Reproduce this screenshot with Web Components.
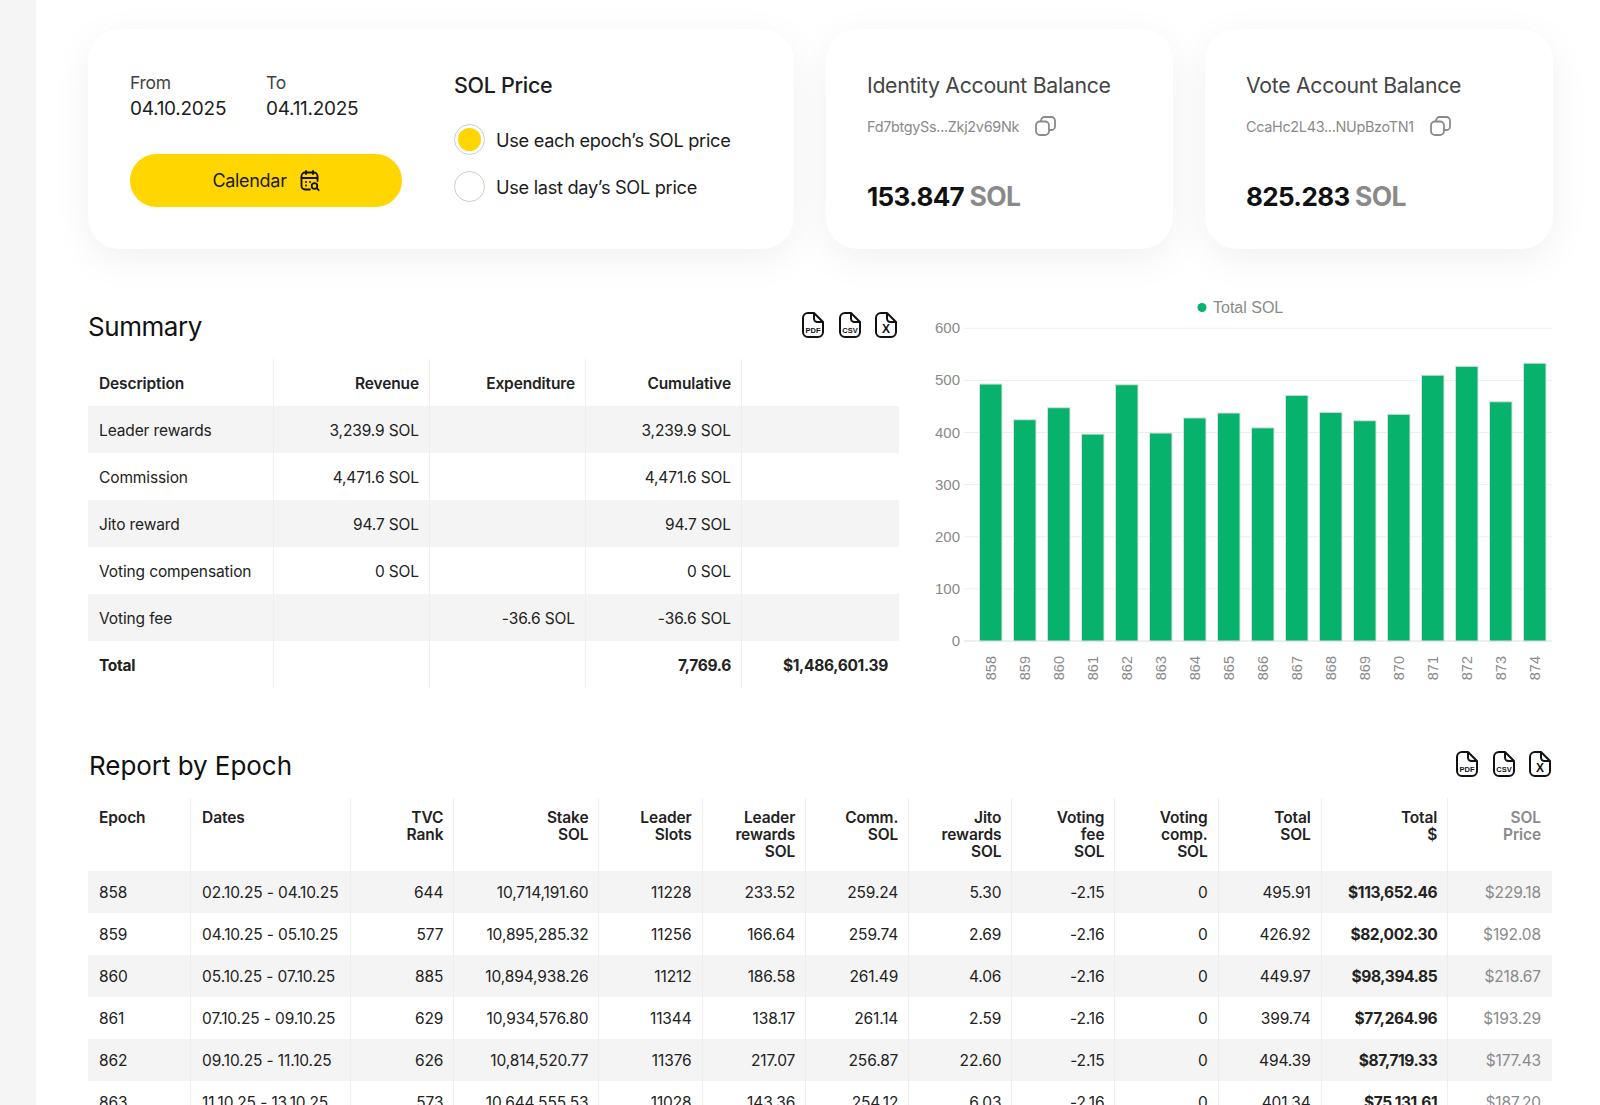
<!DOCTYPE html>
<html lang="en">
<head>
<meta charset="utf-8">
<title>Report</title>
<style>
html,body{margin:0;padding:0;height:1105px;overflow:hidden;background:#fff}
body{font-family:Inter,"Noto Sans",sans-serif;color:#1c1c1c;letter-spacing:-.3px}
</style>
</head>
<body>
<app-shell>
  <div style="display:grid;grid-template-columns:706px 347px 348px;gap:32px">
    <ui-card>
      <range-card></range-card>
    </ui-card>
    <ui-card><balance-card title-text="Identity Account Balance" addr="Fd7btgySs...Zkj2v69Nk" amount="153.847"></balance-card></ui-card>
    <ui-card><balance-card title-text="Vote Account Balance" addr="CcaHc2L43...NUpBzoTN1" amount="825.283"></balance-card></ui-card>
  </div>
  <div style="display:grid;grid-template-columns:811px 621px;gap:33px;margin-top:46px">
    <div>
      <section-head h="64" style="letter-spacing:-.45px">Summary</section-head>
      <summary-table></summary-table>
    </div>
    <sol-chart></sol-chart>
  </div>
  <div style="margin-top:58px">
    <section-head h="40" style="margin-bottom:12px;letter-spacing:-.05px;padding-left:1px">Report by Epoch</section-head>
    <epoch-table></epoch-table>
  </div>
</app-shell>
<script>
const def=(name,html)=>customElements.define(name,class extends HTMLElement{
  connectedCallback(){
    if(this.shadowRoot)return;
    const r=this.attachShadow({mode:'open'});
    r.innerHTML=typeof html==='function'?html(this):html;
  }
});

def('app-shell',`<style>
:host{display:flex;width:1600px;height:1105px;overflow:hidden;background:#fff}
aside{width:36px;flex:none;background:#f5f5f5}
main{flex:1;padding:29px 47px 0 52px;min-width:0}
</style><aside></aside><main><slot></slot></main>`);

def('ui-card',`<style>
:host{display:block;height:220px;box-sizing:border-box;background:#fff;border-radius:32px;box-shadow:0 10px 40px rgba(0,0,0,.06)}
</style><slot></slot>`);

const calIcon=`<svg width="20" height="22" viewBox="0 0 20 22" fill="none" stroke="#111" stroke-width="1.8" stroke-linecap="round" stroke-linejoin="round"><path d="M10 19.5H5a3.5 3.5 0 0 1-3.5-3.5V6A3.5 3.5 0 0 1 5 2.5h9A3.5 3.5 0 0 1 17.5 6v5"/><path d="M1.5 8h16M6 1v3M13 1v3"/><path d="M6 12h.01M10 12h.01M6 15.5h.01" stroke-width="2"/><circle cx="14.5" cy="16" r="2.8"/><path d="M16.7 18.2L18.7 20.2"/></svg>`;

def('range-card',`<style>
:host{display:flex;box-sizing:border-box;height:100%;padding:0 42px}
.l{width:272px;flex:none;margin-right:52px}
.dates{display:flex;gap:0;padding-top:43px}
.dates>div{width:136.5px}
.k{font-size:17.5px;line-height:22px;color:#444}
.v{font-size:19px;line-height:24px;margin-top:3px;color:#1c1c1c;letter-spacing:-.27px}
button{all:unset;box-sizing:border-box;display:flex;align-items:center;justify-content:center;gap:13px;width:272px;height:53px;margin-top:33px;border-radius:27px;background:#ffd600;font-size:18px;color:#1c1c1c}
.r{padding-top:42px}
h3{margin:0;font-size:21.5px;line-height:28px;font-weight:500;color:#1c1c1c}
.opt{display:flex;align-items:center;gap:11px;height:31px;margin-bottom:16px;font-size:18.2px}
.opts{margin-top:25px}
i{display:block;box-sizing:border-box;width:31px;height:31px;border-radius:50%;border:1.5px solid #ccc;background:#fff;position:relative}
i.on::after{content:"";position:absolute;inset:3px;border-radius:50%;background:#ffd600}
</style>
<div class="l"><div class="dates"><div><div class="k">From</div><div class="v">04.10.2025</div></div><div><div class="k">To</div><div class="v">04.11.2025</div></div></div>
<button><span>Calendar</span>${calIcon}</button></div>
<div class="r"><h3>SOL Price</h3><div class="opts">
<div class="opt"><i class="on"></i><span>Use each epoch’s SOL price</span></div>
<div class="opt"><i></i><span>Use last day’s SOL price</span></div></div></div>`);

const copyIcon=`<svg width="21" height="20" viewBox="0 0 21 20" fill="none" stroke="#8a8a8a" stroke-width="1.8" stroke-linejoin="round"><rect x="1" y="5.5" width="13" height="13.5" rx="4"/><path d="M6 5.5V4.5A3.5 3.5 0 0 1 9.5 1H16.5A3.5 3.5 0 0 1 20 4.5V10.5A3.5 3.5 0 0 1 16.5 14H14"/></svg>`;

def('balance-card',el=>`<style>
:host{display:block;padding:42px 0 0 41px}
h3{margin:0;font-size:21.25px;line-height:28px;font-weight:400;color:#444}
.a{display:flex;align-items:center;gap:16px;height:24px;margin-top:15px;font-size:14.4px;color:#8a8a8a}
.b{margin-top:40px;font-size:26px;line-height:36px;font-weight:700;color:#111;letter-spacing:-.65px}
.b span{color:#8a8a8a;font-weight:700;font-size:26.5px}
</style><h3>${el.getAttribute('title-text')}</h3><div class="a"><span>${el.getAttribute('addr')}</span>${copyIcon}</div>
<div class="b">${el.getAttribute('amount')} <span>SOL</span></div>`);

const fileIcon=t=>`<svg width="22" height="26" viewBox="0 0 22 26" fill="none" stroke="#111" stroke-width="2" stroke-linejoin="round"><path d="M6 1H12L21 10V20A5 5 0 0 1 16 25H6A5 5 0 0 1 1 20V6A5 5 0 0 1 6 1Z"/><path d="M12 1V6.5A3.5 3.5 0 0 0 15.5 10H21"/><text x="11" y="${t==='X'?21:20.5}" text-anchor="middle" fill="#111" stroke="none" font-family="Liberation Sans,sans-serif" font-weight="700" font-size="${t==='X'?12:7.5}" letter-spacing="0">${t}</text></svg>`;

def('section-head',el=>`<style>
:host{display:flex;align-items:center;justify-content:space-between;height:${el.getAttribute('h')}px}
h2{margin:0;font-size:26px;line-height:32px;font-weight:400;color:#111}
div{display:flex;gap:14.5px;margin:-4px 2px 0 0}
</style><h2><slot></slot></h2><div>${fileIcon('PDF')}${fileIcon('CSV')}${fileIcon('X')}</div>`);

const tableCss=`
:host{display:block}
table{border-collapse:separate;border-spacing:0;table-layout:fixed;width:100%;font-size:15.5px;color:#222;letter-spacing:-.12px}
th,td{padding:0 10px 0 11px;text-align:right;border-right:1px solid #eee;box-sizing:border-box}
th:last-child,td:last-child{border-right:0;padding-right:11px}
th{font-weight:600;color:#222}
th:first-child,td:first-child{text-align:left}
tbody tr:nth-child(odd){background:#f4f4f4}`;

def('summary-table',()=>{
 const rows=[['Leader rewards','3,239.9 SOL','','3,239.9 SOL',''],['Commission','4,471.6 SOL','','4,471.6 SOL',''],['Jito reward','94.7 SOL','','94.7 SOL',''],['Voting compensation','0 SOL','','0 SOL',''],['Voting fee','','-36.6 SOL','-36.6 SOL','']];
 return `<style>${tableCss}
 tr{height:47px} th,td{padding-top:2px} .tot td{font-weight:700;letter-spacing:-.3px}
 </style><table><colgroup><col style="width:186px"><col style="width:156px"><col style="width:156px"><col style="width:156px"><col></colgroup>
 <thead><tr><th>Description</th><th>Revenue</th><th>Expenditure</th><th>Cumulative</th><th></th></tr></thead>
 <tbody>${rows.map(r=>`<tr>${r.map(c=>`<td>${c}</td>`).join('')}</tr>`).join('')}
 <tr class="tot" style="background:none"><td>Total</td><td></td><td></td><td>7,769.6</td><td>$1,486,601.39</td></tr></tbody></table>`;
});

def('epoch-table',()=>{
 const w=[103,160,103,145,103,103.5,103,103,103,103,103,126.5,103.5];
 const h=['Epoch','Dates','TVC<br>Rank','Stake<br>SOL','Leader<br>Slots','Leader<br>rewards<br>SOL','Comm.<br>SOL','Jito<br>rewards<br>SOL','Voting<br>fee<br>SOL','Voting<br>comp.<br>SOL','Total<br>SOL','Total<br>$','SOL<br>Price'];
 const d=`858|02.10.25 - 04.10.25|644|10,714,191.60|11228|233.52|259.24|5.30|-2.15|0|495.91|$113,652.46|$229.18
859|04.10.25 - 05.10.25|577|10,895,285.32|11256|166.64|259.74|2.69|-2.16|0|426.92|$82,002.30|$192.08
860|05.10.25 - 07.10.25|885|10,894,938.26|11212|186.58|261.49|4.06|-2.16|0|449.97|$98,394.85|$218.67
861|07.10.25 - 09.10.25|629|10,934,576.80|11344|138.17|261.14|2.59|-2.16|0|399.74|$77,264.96|$193.29
862|09.10.25 - 11.10.25|626|10,814,520.77|11376|217.07|256.87|22.60|-2.15|0|494.39|$87,719.33|$177.43
863|11.10.25 - 13.10.25|573|10,644,555.53|11028|143.36|254.12|6.03|-2.16|0|401.34|$75,131.61|$187.20`.split('\n').map(l=>l.split('|'));
 return `<style>${tableCss}
 thead tr{height:73px} th{vertical-align:top;padding-top:11px;line-height:17px}
 tbody tr{height:42px}
 td:nth-child(2),th:nth-child(2){text-align:left}
 td:nth-child(12){font-weight:700;letter-spacing:-.38px}
 td:nth-child(13),th:nth-child(13){color:#8a8a8a}
 </style><table style="width:1464px"><colgroup>${w.map(x=>`<col style="width:${x}px">`).join('')}</colgroup>
 <thead><tr>${h.map(c=>`<th>${c}</th>`).join('')}</tr></thead>
 <tbody>${d.map(r=>`<tr>${r.map(c=>`<td>${c}</td>`).join('')}</tr>`).join('')}</tbody></table>`;
});

def('sol-chart',()=>{
 const vals=[493,424.6,447.6,397,491.7,399,428,437.5,409,471.4,438.7,422.7,435,510,527,459,533];
 const y0=641-295,k=.5212;
 let s='';
 for(let v=0;v<=600;v+=100){const y=y0-v*k;
  s+=`<line x1="32" x2="620" y1="${y}" y2="${y}" stroke="${v?'#eee':'#ddd'}" stroke-width="1"/>`;
  s+=`<text x="28" y="${y+5}" text-anchor="end" font-size="15">${v}</text>`;}
 vals.forEach((v,i)=>{const x=47.5+34*i,h=v*k;
  s+=`<rect x="${x}" y="${y0-h}" width="22.5" height="${h}" fill="#07b36c" stroke="#dedede" stroke-width="1"/>`;
  s+=`<text transform="translate(${x+16.5} 361) rotate(-90)" text-anchor="end" font-size="14.5">${858+i}</text>`;});
 return `<style>:host{display:block;height:393px}svg{display:block;font-family:"Liberation Sans",Arial,sans-serif;letter-spacing:0}text{fill:#8a8a8a}</style>
 <svg width="621" height="393" viewBox="0 0 621 393"><circle cx="270" cy="12.5" r="4.5" fill="#07b36c"/><text x="281" y="18" font-size="16">Total SOL</text>${s}</svg>`;
});
</script>
</body>
</html>
